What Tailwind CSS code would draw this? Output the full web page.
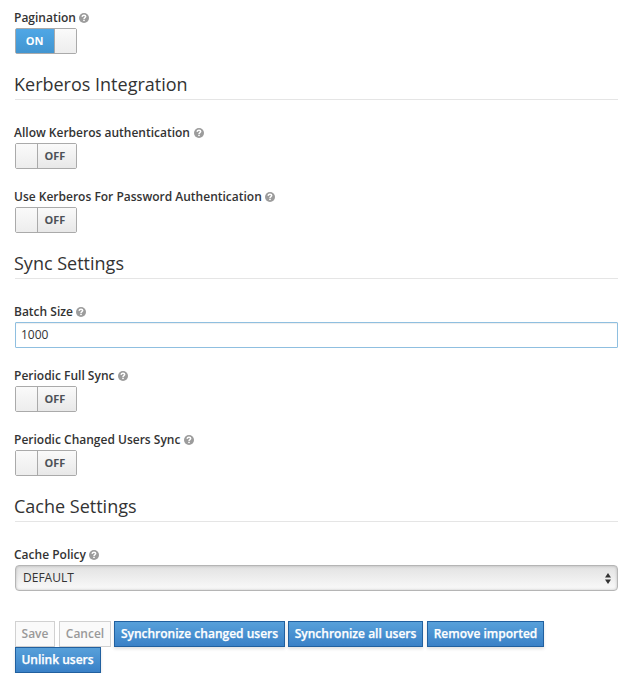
<!DOCTYPE html>
<html lang="en">
<head>
<meta charset="utf-8">
<title>User federation settings</title>
<script src="https://cdn.jsdelivr.net/npm/@tailwindcss/browser@4"></script>
</head>
<body class="bg-white text-[#333] font-['Open_Sans',sans-serif] text-[12px]">
<svg class="hidden">
  <symbol id="help" viewBox="0 0 10 10">
    <circle cx="5" cy="5" r="5" fill="#9c9c9c"/>
    <path d="M3 3.7C3.3 2.5 4 2.2 5 2.2c1.1 0 1.7.6 1.7 1.4C6.7 4.6 5 4.6 5 5.9" fill="none" stroke="#fff" stroke-width="1.5"/>
    <rect x="4.2" y="6.7" width="1.6" height="1.4" fill="#fff"/>
  </symbol>
</svg>
<form class="flex flex-col pl-[15px] pr-3 pt-2">
  <div class="mb-5">
    <div class="-ml-px flex h-5 items-center gap-[3.5px] font-semibold"><span>Pagination</span><svg class="size-[10px]"><use href="#help"/></svg></div>
    <div class="flex h-[26px] w-[62px] rounded-[2px] border border-[#aaa] text-[11px] font-bold leading-6">
      <span class="w-[38px] bg-linear-to-b from-[#4fa7e6] to-[#4295d0] pr-px text-center text-white">ON</span><span class="flex-1 border-l border-[#aaa] bg-linear-to-b from-[#fafafa] to-[#ededed]"></span>
    </div>
  </div>

  <h2 class="h-[26px] border-b border-[#e5e5e5] mb-[23px] -indent-px text-[18px] leading-[20px]">Kerberos Integration</h2>
  <div class="mb-[18px]">
    <div class="-ml-px flex h-5 items-center gap-[3.5px] font-semibold"><span>Allow Kerberos authentication</span><svg class="size-[10px]"><use href="#help"/></svg></div>
    <div class="flex h-[26px] w-[62px] rounded-[2px] border border-[#aaa] text-[11px] font-bold leading-6 text-[#4d5258]">
      <span class="w-[21px] bg-linear-to-b from-[#fafafa] to-[#ededed]"></span><span class="flex-1 border-l border-[#aaa] bg-linear-to-b from-[#fafafa] to-[#e8e8e8] pl-[6.5px]">OFF</span>
    </div>
  </div>
  <div class="mb-5">
    <div class="-ml-px flex h-5 items-center gap-[3.5px] font-semibold"><span>Use Kerberos For Password Authentication</span><svg class="size-[10px]"><use href="#help"/></svg></div>
    <div class="flex h-[26px] w-[62px] rounded-[2px] border border-[#aaa] text-[11px] font-bold leading-6 text-[#4d5258]">
      <span class="w-[21px] bg-linear-to-b from-[#fafafa] to-[#ededed]"></span><span class="flex-1 border-l border-[#aaa] bg-linear-to-b from-[#fafafa] to-[#e8e8e8] pl-[6.5px]">OFF</span>
    </div>
  </div>

  <h2 class="h-[26px] border-b border-[#e5e5e5] mb-[23px] -indent-px text-[18px] leading-[20px]">Sync Settings</h2>
  <div class="mb-[18px]">
    <div class="-ml-px flex h-5 items-center gap-[3.5px] font-semibold"><span>Batch Size</span><svg class="size-[10px]"><use href="#help"/></svg></div>
    <input type="text" value="1000" class="block h-[26px] w-full rounded-[1px] border border-[#8fbfe0] px-[5px] pb-[2px] text-[12px] shadow-[inset_0_1px_1px_rgba(0,0,0,0.07)] outline-none">
  </div>
  <div class="mb-[18px]">
    <div class="-ml-px flex h-5 items-center gap-[3.5px] font-semibold"><span>Periodic Full Sync</span><svg class="size-[10px]"><use href="#help"/></svg></div>
    <div class="flex h-[26px] w-[62px] rounded-[2px] border border-[#aaa] text-[11px] font-bold leading-6 text-[#4d5258]">
      <span class="w-[21px] bg-linear-to-b from-[#fafafa] to-[#ededed]"></span><span class="flex-1 border-l border-[#aaa] bg-linear-to-b from-[#fafafa] to-[#e8e8e8] pl-[6.5px]">OFF</span>
    </div>
  </div>
  <div class="mb-5">
    <div class="-ml-px flex h-5 items-center gap-[3.5px] font-semibold"><span>Periodic Changed Users Sync</span><svg class="size-[10px]"><use href="#help"/></svg></div>
    <div class="flex h-[26px] w-[62px] rounded-[2px] border border-[#aaa] text-[11px] font-bold leading-6 text-[#4d5258]">
      <span class="w-[21px] bg-linear-to-b from-[#fafafa] to-[#ededed]"></span><span class="flex-1 border-l border-[#aaa] bg-linear-to-b from-[#fafafa] to-[#e8e8e8] pl-[6.5px]">OFF</span>
    </div>
  </div>

  <h2 class="h-[26px] border-b border-[#e5e5e5] mb-[23px] -indent-px text-[18px] leading-[20px]">Cache Settings</h2>
  <div class="mb-[30px]">
    <div class="-ml-px flex h-5 items-center gap-[3.5px] font-semibold"><span>Cache Policy</span><svg class="size-[10px]"><use href="#help"/></svg></div>
    <div class="flex h-[26px] items-center justify-between rounded-[4px] border border-[#b5b5b5] bg-linear-to-b from-[#e2e2e2] to-[#fafafa] pl-[7px] pr-[6px] shadow-[inset_0_0_3px_rgba(0,0,0,0.22)]">
      <span>DEFAULT</span>
      <svg class="h-[11px] w-[6px]" viewBox="0 0 6 11" fill="#333"><path d="M3 0 6 4.6H0zM3 11 0 6.4h6z"/></svg>
    </div>
  </div>

  <div class="flex flex-wrap font-semibold leading-6">
    <button type="button" class="mr-1 h-[26px] w-10 border border-[#d1d1d1] bg-[#fafafa] text-[#999]">Save</button>
    <button type="button" class="mr-[3px] h-[26px] w-[52px] border border-[#d1d1d1] bg-[#fafafa] text-[#999]">Cancel</button>
    <button type="button" class="mr-[3px] h-[26px] w-[171px] border border-[#21609f] bg-linear-to-b from-[#57a0da] to-[#3a81c7] text-white [-webkit-text-stroke:0.25px_white] shadow-[0_2px_3px_rgba(0,0,0,0.12)]">Synchronize changed users</button>
    <button type="button" class="mr-1 h-[26px] w-[135px] border border-[#21609f] bg-linear-to-b from-[#57a0da] to-[#3a81c7] text-white [-webkit-text-stroke:0.25px_white] shadow-[0_2px_3px_rgba(0,0,0,0.12)]">Synchronize all users</button>
    <button type="button" class="h-[26px] w-[117px] border border-[#21609f] bg-linear-to-b from-[#57a0da] to-[#3a81c7] text-white [-webkit-text-stroke:0.25px_white] shadow-[0_2px_3px_rgba(0,0,0,0.12)]">Remove imported</button>
    <button type="button" class="h-[26px] w-[86px] border border-[#21609f] bg-linear-to-b from-[#57a0da] to-[#3a81c7] pr-px text-white [-webkit-text-stroke:0.25px_white] shadow-[0_2px_3px_rgba(0,0,0,0.12)]">Unlink users</button>
  </div>
</form>
</body>
</html>
